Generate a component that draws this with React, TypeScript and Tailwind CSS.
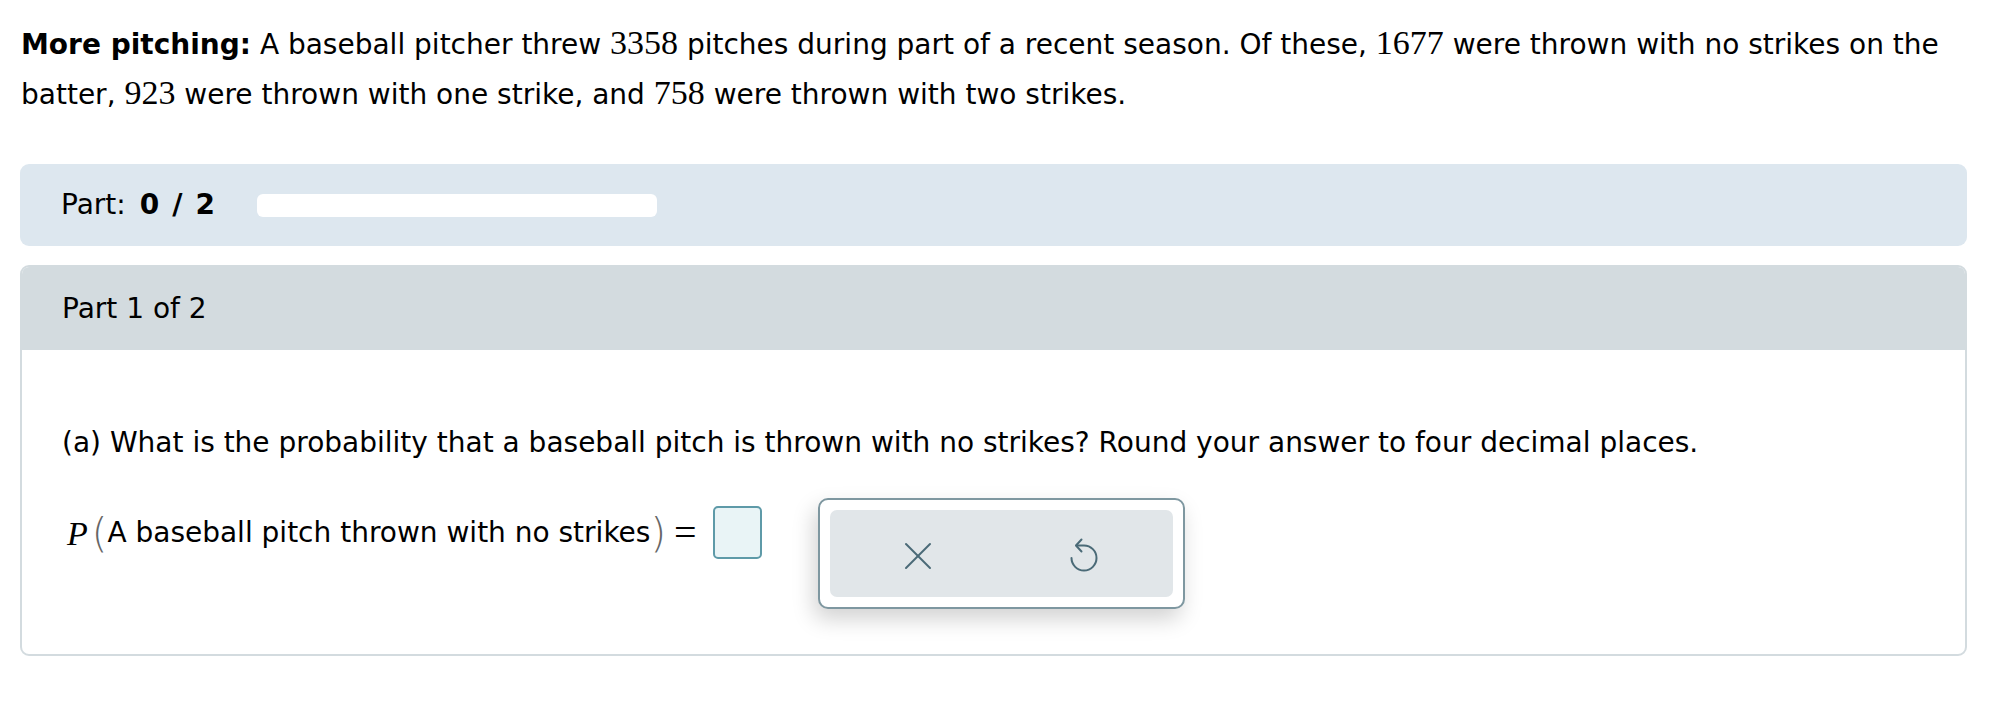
import React from "react";

const num = "font-['Liberation_Serif',serif] text-[34px]";

function Num({ children }: { children: React.ReactNode }) {
  return <span className={num}>{children}</span>;
}

function UndoIcon() {
  return (
    <svg width="32" height="36" viewBox="0 0 32 36" fill="none" stroke="#4a6a77" strokeWidth="2" strokeLinecap="round" strokeLinejoin="round">
      <path d="M8.5 8.5 H16 A12.5 12.5 0 1 1 3.5 21" />
      <path d="M13.5 2.5 L8 8.5 L13.5 14.5" />
    </svg>
  );
}

function CloseIcon() {
  return (
    <svg width="32" height="32" viewBox="0 0 32 32" fill="none" stroke="#4a6a77" strokeWidth="2" strokeLinecap="round">
      <path d="M4 4 L28 28" />
      <path d="M28 4 L4 28" />
    </svg>
  );
}

export default function App() {
  return (
    <div className="min-h-screen bg-white pl-[20px] pr-[25px] pt-[19px] font-['DejaVu_Sans',sans-serif] text-[28px] text-black">
      <p className="pl-[1px] leading-[48px]">
        <b>More pitching:</b> A baseball pitcher threw <Num>3358</Num> pitches during part of a recent season. Of these, <Num>1677</Num> were
        thrown with no strikes on the batter, <Num>923</Num> were thrown with one strike, and <Num>758</Num> were thrown with two strikes.
      </p>

      <div className="mt-[45px] flex h-[82px] items-center rounded-[9px] bg-[#dde7ef] pl-[41px]">
        <span>Part:</span>
        <b className="ml-[14px]">0</b>
        <b className="ml-[13px]">/</b>
        <b className="ml-[13px]">2</b>
        <div className="ml-[42px] h-[23px] w-[400px] rounded-[6px] bg-white" />
      </div>

      <div className="mt-[19px] overflow-hidden rounded-[9px] border-2 border-[#d3dbdf]">
        <div className="flex h-[83px] items-center bg-[#d3dbdf] pl-[40px]">Part 1 of 2</div>
        <div className="pl-[40px] pb-[45px] pt-[74px]">
          <p className="leading-[38px]">
            (a) What is the probability that a baseball pitch is thrown with no strikes? Round your answer to four decimal places.
          </p>
          <div className="mt-[39px] flex items-start">
            <div className="flex h-[64px] items-center">
              <span className="ml-[5px] font-['Liberation_Serif',serif] text-[34px] italic">P</span>
              <span className="ml-[4px] font-['DejaVu_Sans',sans-serif] text-[40px] font-extralight text-[#666]">(</span>
              <span>A baseball pitch thrown with no strikes</span>
              <span className="font-['DejaVu_Sans',sans-serif] text-[40px] font-extralight text-[#666]">)</span>
              <span className="ml-[8px] font-['Liberation_Serif',serif] text-[40px] leading-none">=</span>
              <div className="ml-[16px] mt-[-2px] h-[53px] w-[49px] rounded-[5px] border-2 border-[#5e9aa8] bg-[#e9f4f6]" />
            </div>
            <div className="ml-[56px] mt-[-3px] rounded-[10px] border-2 border-[#7e97a0] bg-white p-[10px] shadow-[-4px_10px_22px_rgba(0,0,0,0.18)]">
              <div className="flex h-[87px] w-[343px] items-center rounded-[7px] bg-[#e1e6e9]">
                <div className="flex flex-1 justify-center pl-[6px] pt-[4px]">
                  <CloseIcon />
                </div>
                <div className="flex flex-1 justify-center pr-[6px] pt-[2px]">
                  <UndoIcon />
                </div>
              </div>
            </div>
          </div>
        </div>
      </div>
    </div>
  );
}
